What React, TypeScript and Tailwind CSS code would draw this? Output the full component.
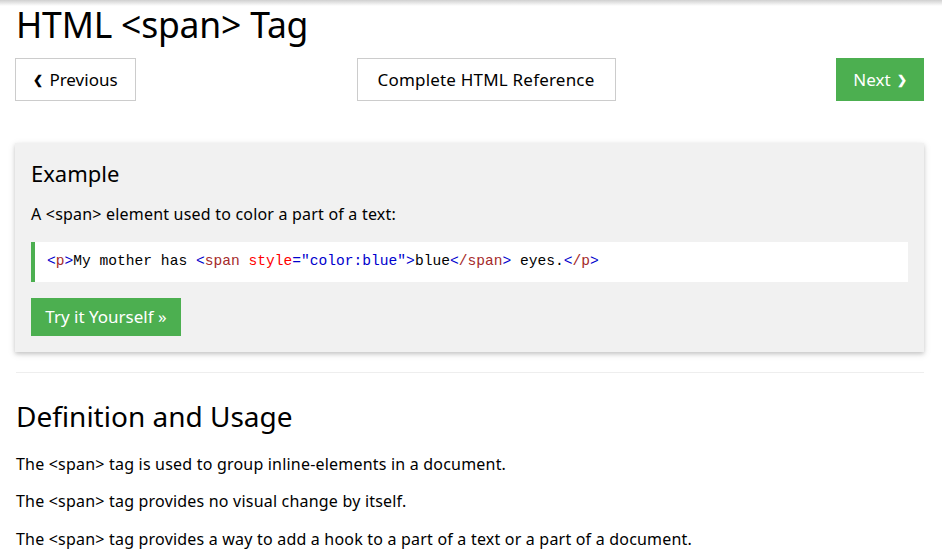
import React from "react";

const sans = { fontFamily: '"Noto Sans", "Open Sans", sans-serif' };

export default function App() {
  return (
    <div className="w-[942px] h-[556px] overflow-hidden bg-white text-black relative" style={sans}>
      <div className="absolute top-0 left-0 right-0 h-[6px] bg-gradient-to-b from-[#d0d0d0] to-transparent" />
      <div className="px-[16px] pr-[18px]">
        <h1 className="text-[35.5px] leading-[48px] tracking-[-0.2px]">HTML &lt;span&gt; Tag</h1>
        <div className="mt-[10px] flex items-center justify-between h-[43px]">
          <div className="h-[43px] w-[121px] -ml-[1px] border border-[#cccccc] flex items-center justify-center text-[17px] gap-[6px]">
            <span className="text-[12px] font-bold">❮</span>
            <span>Previous</span>
          </div>
          <div className="h-[43px] w-[259px] border border-[#cccccc] flex items-center justify-center text-[17px] tracking-[0.2px]">
            Complete HTML Reference
          </div>
          <div className="h-[43px] w-[88px] bg-[#4caf50] text-white flex items-center justify-center text-[17px] gap-[6px]">
            <span>Next</span>
            <span className="text-[12px] font-bold">❯</span>
          </div>
        </div>
        <div className="mt-[42px] -ml-[1px] bg-[#f1f1f1] pl-[16px] pr-[16px] pt-[14px] pb-[16px] shadow-[0_2px_4px_0_rgba(0,0,0,0.16),0_2px_8px_0_rgba(0,0,0,0.10)]">
          <h2 className="text-[22px] leading-[32px]">Example</h2>
          <p className="mt-[13px] text-[16px] leading-[24px] tracking-[0.2px]">A &lt;span&gt; element used to color a part of a text:</p>
          <div
            className="mt-[16px] bg-white border-l-[4px] border-[#4caf50] h-[40px] flex items-center pl-[12px] text-[14.6px] whitespace-pre"
            style={{ fontFamily: '"Liberation Mono", "DejaVu Sans Mono", monospace' }}
          >
            <span className="text-[#0000cd]">&lt;</span>
            <span className="text-[#a52a2a]">p</span>
            <span className="text-[#0000cd]">&gt;</span>
            <span>My mother has </span>
            <span className="text-[#0000cd]">&lt;</span>
            <span className="text-[#a52a2a]">span</span>
            <span className="text-[#ff0000]"> style</span>
            <span className="text-[#0000cd]">=&quot;color:blue&quot;</span>
            <span className="text-[#0000cd]">&gt;</span>
            <span>blue</span>
            <span className="text-[#0000cd]">&lt;</span>
            <span className="text-[#a52a2a]">/span</span>
            <span className="text-[#0000cd]">&gt;</span>
            <span> eyes.</span>
            <span className="text-[#0000cd]">&lt;</span>
            <span className="text-[#a52a2a]">/p</span>
            <span className="text-[#0000cd]">&gt;</span>
          </div>
          <div className="mt-[16px] h-[38px] w-[150px] bg-[#4caf50] text-white flex items-center justify-center text-[17px]">
            Try it Yourself »
          </div>
        </div>
        <div className="mt-[20px] border-t border-[#eeeeee]" />
        <h2 className="mt-[24px] text-[28px] leading-[38px]">Definition and Usage</h2>
        <p className="mt-[17px] text-[16px] leading-[24px] tracking-[0.2px]">The &lt;span&gt; tag is used to group inline-elements in a document.</p>
        <p className="mt-[13px] text-[16px] leading-[24px] tracking-[0.2px]">The &lt;span&gt; tag provides no visual change by itself.</p>
        <p className="mt-[14px] text-[16px] leading-[24px] tracking-[0.2px]">The &lt;span&gt; tag provides a way to add a hook to a part of a text or a part of a document.</p>
      </div>
    </div>
  );
}
